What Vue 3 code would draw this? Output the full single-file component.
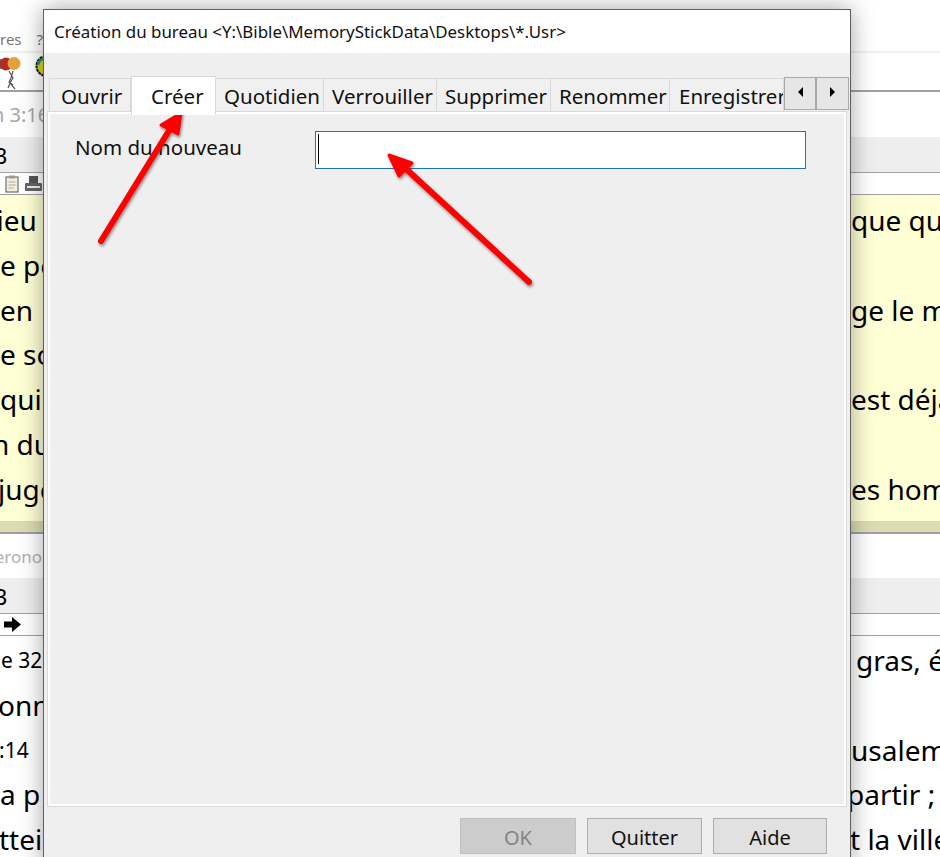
<script setup>
const tabs = [
  { label: 'Ouvrir', width: 82, pad: 11 },
  { label: 'Créer', width: 85, pad: 19, active: true },
  { label: 'Quotidien', width: 108, pad: 8 },
  { label: 'Verrouiller', width: 113, pad: 8 },
  { label: 'Supprimer', width: 114, pad: 8 },
  { label: 'Renommer', width: 119, pad: 8 },
  { label: 'Enregistrer', width: 114, pad: 9 },
]
const yellowLines = [
  { left: 'Dieu', shift: -24, right: 'que qui' },
  { left: 'e po', shift: 0, right: '' },
  { left: 'en', shift: 0, right: 'ge le ma' },
  { left: 'e so', shift: 0, right: '' },
  { left: 'qui', shift: 0, right: 'est déjà' },
  { left: 'n du', shift: -8, right: '' },
  { left: 'juge', shift: -2, right: 'es hom' },
]
const whiteLines = [
  { left: 'ne 32', shift: -12, right: 'gras, é', small: true, gap: 5 },
  { left: 'onn', shift: -2, right: '', gap: 0 },
  { left: ':14', shift: -1, right: 'usalem', small: true, gap: 0 },
  { left: 'a p', shift: 0, right: 'partir ;', gap: -4 },
  { left: 'ttei', shift: -1, right: 't la ville', gap: -1 },
]
</script>

<template>
  <div class="desktop">
    <div class="back">
      <div class="menubar">
        <span class="menu-a">res</span>
        <span class="menu-b">?</span>
      </div>
      <div class="toolbar">
        <svg class="balloons" width="24" height="36" viewBox="0 0 24 36">
          <path d="M9 16 L13 23 L10 28 L15 34 M13 16 L11 23 L9 27 L13 30 M10 28 L8 33" fill="none" stroke="#555" stroke-width="1.200" />
          <circle cx="1" cy="9" r="5" fill="#3f9f3f" />
          <circle cx="6" cy="9" r="6.500" fill="#b32a2a" />
          <circle cx="14" cy="8.500" r="6.500" fill="#e3a238" />
        </svg>
        <svg class="globe" width="24" height="24" viewBox="0 0 24 24">
          <circle cx="11.500" cy="11" r="10" fill="#d6d620" stroke="#111" stroke-width="2" stroke-dasharray="3 0.600" />
          <path d="M3 10 Q4 4 10 3" fill="none" stroke="#1f8f6f" stroke-width="2.500" />
        </svg>
      </div>
      <div class="ref-row"><span class="ref-text">n 3:16</span></div>
      <div class="tab-row"><span class="tab-b">B</span></div>
      <div class="tool-row">
        <svg class="tool-icon first" width="14" height="18" viewBox="0 0 14 18">
          <rect x="1" y="2" width="12" height="15" fill="#f4eedd" stroke="#555" />
          <rect x="4" y="0.5" width="6" height="3" fill="#999" />
          <path d="M3.500 7h7M3.500 10h7M3.500 13h5" stroke="#aaa" />
        </svg>
        <svg class="tool-icon" width="17" height="16" viewBox="0 0 17 16">
          <rect x="4" y="0" width="9" height="7" fill="#555" />
          <rect x="0" y="7" width="17" height="8" rx="1" fill="#666" />
          <rect x="2" y="10" width="13" height="2" fill="#eee" />
        </svg>
      </div>
      <div class="text-pane yellow">
        <div v-for="(line, i) in yellowLines" :key="i" class="text-line">
          <span class="frag-left"><span :style="{ marginLeft: line.shift + 'px' }">{{ line.left }}</span></span>
          <span class="frag-right">{{ line.right }}</span>
        </div>
      </div>
      <div class="yellow-foot"></div>
      <div class="ref-row second"><span class="ref-text">Deuteronome</span></div>
      <div class="tab-row second"><span class="tab-b">B</span></div>
      <div class="tool-row second">
        <svg class="tool-icon arrow" width="17" height="15" viewBox="0 0 17 15">
          <path d="M0 4.500h8V0l9 7.500-9 7.500v-4.500H0z" fill="#000" />
        </svg>
      </div>
      <div class="text-pane white">
        <div v-for="(line, i) in whiteLines" :key="i" class="text-line" :class="{ small: line.small }">
          <span class="frag-left"><span :style="{ marginLeft: line.shift + 'px' }">{{ line.left }}</span></span>
          <span class="frag-right"><span :style="{ marginLeft: line.gap + 'px' }">{{ line.right }}</span></span>
        </div>
      </div>
    </div>

    <div class="dialog">
      <div class="title">Création du bureau &lt;Y:\Bible\MemoryStickData\Desktops\*.Usr&gt;</div>
      <div class="body">
        <div class="tabstrip">
          <div
            v-for="tab in tabs"
            :key="tab.label"
            class="tab"
            :class="{ active: tab.active }"
            :style="{ width: tab.width + 'px', paddingLeft: tab.pad + 'px' }"
          >{{ tab.label }}</div>
          <div class="scrollers">
            <button class="scroll" type="button"><span class="tri left"></span></button>
            <button class="scroll" type="button"><span class="tri right"></span></button>
          </div>
        </div>
        <div class="panel">
          <div class="form-row">
            <label class="field-label">Nom du nouveau</label>
            <div class="field"><span class="caret"></span></div>
          </div>
        </div>
        <div class="actions">
          <button class="btn disabled" type="button">OK</button>
          <button class="btn" type="button">Quitter</button>
          <button class="btn last" type="button">Aide</button>
        </div>
      </div>
    </div>

    <svg class="arrows" width="940" height="857" viewBox="0 0 940 857">
      <defs>
        <filter id="arrow-shadow" x="-20%" y="-20%" width="140%" height="140%">
          <feDropShadow dx="1" dy="2" stdDeviation="1.500" flood-color="#000" flood-opacity="0.45" />
        </filter>
      </defs>
      <g filter="url(#arrow-shadow)" fill="#fe0000" stroke="#fe0000" stroke-linejoin="round" stroke-linecap="round">
        <path d="M101 241 L170 129" fill="none" stroke-width="6" />
        <path d="M181 113 L161 125 L178 134 Z" stroke-width="3" />
        <path d="M529 282 L404 167" fill="none" stroke-width="6" />
        <path d="M389 155 L412 163 L399 176 Z" stroke-width="3" />
      </g>
    </svg>
  </div>
</template>

<style>
html, body { margin: 0; overflow: hidden; background: #fff; }
</style>

<style scoped>
.desktop {
  position: relative;
  width: 940px;
  height: 857px;
  overflow: hidden;
  background: #fff;
  font-family: "Noto Sans", "Open Sans", sans-serif;
  color: #000;
}
.back { display: flex; flex-direction: column; width: 940px; }
.menubar {
  box-sizing: border-box;
  display: flex;
  align-items: flex-end;
  gap: 15px;
  padding-bottom: 2px;
  border-bottom: 2px solid #f0f0f0;
  height: 53px;
  font-size: 15px;
  color: #777;
}
.toolbar {
  height: 37px;
  box-sizing: border-box;
  display: flex;
  align-items: flex-start;
  gap: 10px;
  padding-top: 2px;
}
.balloons { flex: none; }
.globe { flex: none; margin-left: 1px; }
.ref-row {
  height: 47px;
  box-sizing: border-box;
  border-top: 2px solid #a0a0a0;
  display: flex;
  align-items: center;
  font-size: 20px;
  color: #a6a6a6;
  overflow: hidden;
}
.ref-row .ref-text { margin-left: -8px; white-space: nowrap; }
.ref-row.second { height: 45px; border-top: 1px solid #9f9f9f; font-size: 17px; color: #b0b0b0; }
.ref-row.second .ref-text { margin-left: -44px; }
.tab-row {
  height: 35px;
  box-sizing: border-box;
  background: #eee;
  display: flex;
  align-items: center;
  font-size: 22px;
  overflow: hidden;
}
.tab-b { margin-left: -7px; }
.tool-row {
  height: 23px;
  box-sizing: border-box;
  border-top: 1px solid #a0a0a0;
  border-bottom: 1px solid #a0a0a0;
  display: flex;
  align-items: center;
  gap: 6px;
}
.tool-icon { flex: none; }
.tool-icon.first { margin-left: 5px; }
.tool-icon.arrow { margin-left: 4px; }
.text-pane { display: flex; flex-direction: column; box-sizing: border-box; }
.text-pane.yellow { background: #ffffd6; height: 326px; padding-top: 3px; }
.text-pane.white { padding-top: 2px; }
.yellow-foot { height: 12px; box-sizing: border-box; background: #dcdcb2; border-bottom: 1px solid #a0a0a0; }
.text-line {
  height: 44.800px;
  line-height: 44.800px;
  font-size: 28px;
  display: grid;
  grid-template-columns: 43px 89px;
  column-gap: 808px;
  white-space: nowrap;
}
.text-line.small .frag-left { font-size: 21px; }
.frag-left { overflow: hidden; display: block; }
.frag-right { display: block; overflow: hidden; }

.dialog {
  position: absolute;
  left: 43px;
  top: 9px;
  width: 808px;
  height: 860px;
  box-sizing: border-box;
  border: 1px solid #5f5f5f;
  background: #f0f0f0;
  box-shadow: 0 0 22px rgba(0, 0, 0, 0.36);
  display: flex;
  flex-direction: column;
}
.title {
  height: 43px;
  flex: none;
  background: #fff;
  padding-left: 10px;
  line-height: 43px;
  font-size: 16.900px;
  white-space: nowrap;
  color: #111;
}
.body { flex: 1; display: flex; flex-direction: column; background: #efefef; }
.tabstrip {
  flex: none;
  height: 59px;
  box-sizing: border-box;
  padding: 25px 0 0 5px;
  display: flex;
  align-items: flex-start;
  position: relative;
  z-index: 1;
}
.tab {
  height: 34px;
  flex: none;
  box-sizing: border-box;
  border: 1px solid #d9d9d9;
  border-left-width: 0;
  line-height: 35px;
  font-size: 20.500px;
  color: #111;
  white-space: nowrap;
  background: #f0f0f0;
  overflow: hidden;
}
.tab:first-child { border-left-width: 1px; }
.tab.active {
  background: #fff;
  height: 39px;
  margin-top: -2px;
  border-bottom: 0;
  border-left-width: 1px;
  line-height: 38px;
}
.scrollers { display: flex; flex: none; margin-top: -1px; }
.scroll {
  width: 32px;
  height: 33px;
  padding: 0;
  background: #e6e6e6;
  border: 1px solid #a9a9a9;
  display: flex;
  align-items: center;
  justify-content: center;
}
.scroll + .scroll { width: 33px; }
.tri { width: 0; height: 0; border-top: 5px solid transparent; border-bottom: 5px solid transparent; margin-bottom: 4px; }
.tri.left { border-right: 5px solid #000; }
.tri.right { border-left: 5px solid #000; }
.panel {
  flex: none;
  height: 696px;
  margin: -1px 3px 0;
  box-sizing: border-box;
  width: 800px;
  border: 1px solid #d9d9d9;
  outline: 2px solid #fff;
  outline-offset: -3px;
  background: #efefef;
  padding: 19px 0 0 27px;
}
.form-row { display: flex; align-items: flex-start; }
.field-label { width: 240px; font-size: 20.500px; line-height: 33px; color: #111; flex: none; }
.field {
  width: 491px;
  height: 38px;
  box-sizing: border-box;
  border: 1px solid #1b74bd;
  background: #fff;
  padding: 2px 2px;
}
.caret { display: block; width: 1px; height: 30px; background: #000; }
.actions {
  flex: none;
  display: flex;
  gap: 11px;
  justify-content: flex-end;
  padding: 11px 23px 0 0;
}
.btn {
  width: 115px;
  height: 36px;
  box-sizing: border-box;
  background: #e1e1e1;
  border: 1px solid #adadad;
  font-family: inherit;
  font-size: 20px;
  line-height: 34px;
  color: #111;
  padding: 2px 0 0;
}
.btn.last { width: 114px; }
.btn.disabled { width: 116px; background: #cccccc; border-color: #bfbfbf; color: #838383; }
.arrows { position: absolute; left: 0; top: 0; pointer-events: none; }
</style>
